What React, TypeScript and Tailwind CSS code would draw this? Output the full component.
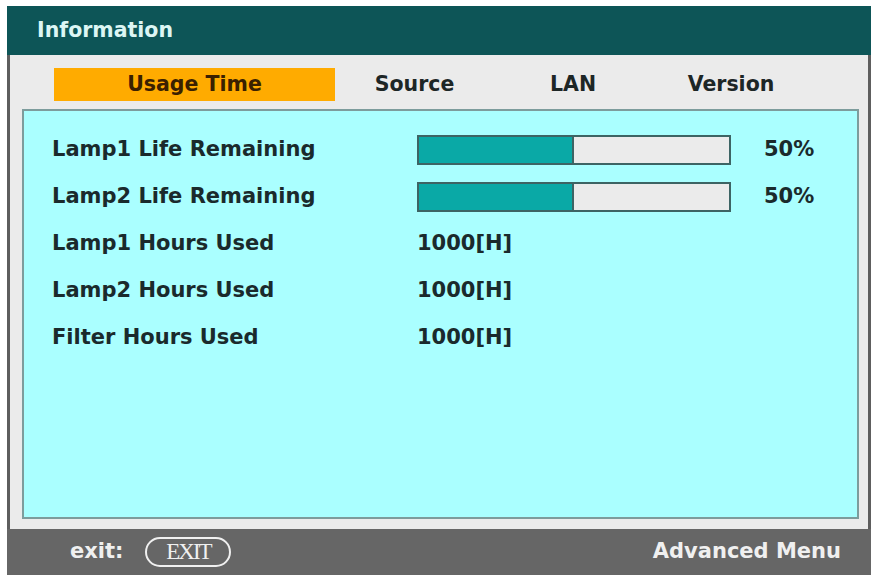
import React from "react";

const font = { fontFamily: '"DejaVu Sans", Verdana, sans-serif' };

function Bar({ pct }: { pct: number }) {
  return (
    <div className="flex h-[30px] w-[314px] border-2 border-[#3d6464] bg-[#ebebeb]">
      <div className="h-full bg-[#0aa9a6] border-r-2 border-[#3d6464]" style={{ width: `${pct}%` }} />
    </div>
  );
}

export default function App() {
  const rows: { label: string; bar?: number; value?: string }[] = [
    { label: "Lamp1 Life Remaining", bar: 50 },
    { label: "Lamp2 Life Remaining", bar: 50 },
    { label: "Lamp1 Hours Used", value: "1000[H]" },
    { label: "Lamp2 Hours Used", value: "1000[H]" },
    { label: "Filter Hours Used", value: "1000[H]" },
  ];
  return (
    <div className="w-[876px] h-[578px] bg-white pl-[7px] pt-[6px]" style={font}>
      <div className="w-[864px] h-[569px] flex flex-col">
        <div className="h-[49px] bg-[#0d5557] flex items-center pl-[30px] text-[20.5px] font-bold text-[#dcf6f4]">
          Information
        </div>
        <div className="h-[474px] bg-[#ebebeb] border-l-[3px] border-r-[3px] border-[#5e5e5e] flex flex-col pt-[13px] pl-[12px]">
          <div className="flex h-[33px] text-[20.5px] font-bold text-[#1d2626]">
            <div className="ml-[32px] w-[281px] bg-[#ffab00] flex items-center justify-center text-[#3a2000]">Usage Time</div>
            <div className="w-[159px] flex items-center justify-center">Source</div>
            <div className="w-[158px] flex items-center justify-center">LAN</div>
            <div className="w-[158px] flex items-center justify-center">Version</div>
          </div>
          <div className="mt-[8px] w-[837px] h-[410px] bg-[#aaffff] border-2 border-[#7d9c9c] pt-[15px] pl-[28px] text-[21px] font-bold text-[#1a2a2c]">
            {rows.map((r) => (
              <div key={r.label} className="h-[47px] flex items-center">
                <div className="w-[365px]">{r.label}</div>
                {r.bar !== undefined ? (
                  <>
                    <Bar pct={r.bar} />
                    <div className="ml-[33px]">{r.bar}%</div>
                  </>
                ) : (
                  <div>{r.value}</div>
                )}
              </div>
            ))}
          </div>
        </div>
        <div className="h-[46px] bg-[#666666] flex items-center pl-[63px] pr-[30px] text-[21px] font-bold text-[#f0f0f0]">
          <span>exit:</span>
          <span
            className="ml-[22px] h-[30px] w-[86px] rounded-full border-2 border-[#f0f0f0] flex items-center justify-center text-[23px] font-normal tracking-[-2px]"
            style={{ fontFamily: '"Liberation Serif", "Times New Roman", serif' }}
          >
            EXIT
          </span>
          <span className="ml-auto">Advanced Menu</span>
        </div>
      </div>
    </div>
  );
}
